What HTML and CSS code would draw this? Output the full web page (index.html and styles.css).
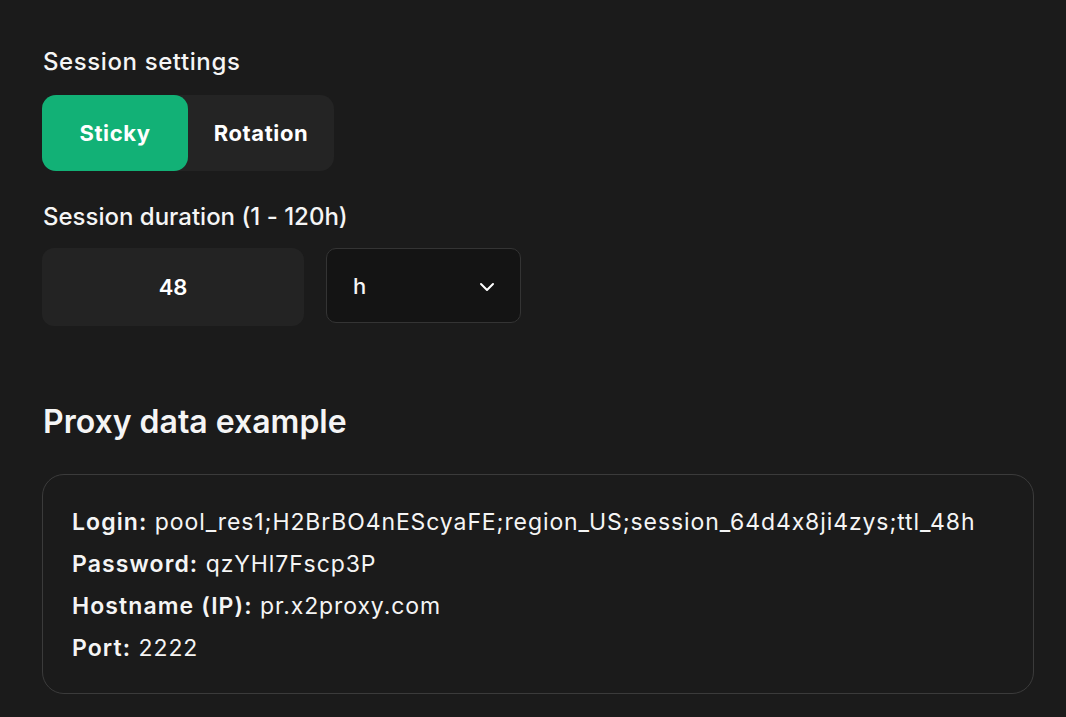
FILE: index.html
```html
<!DOCTYPE html>
<html lang="en">
<head>
    <meta charset="UTF-8">
    <meta name="viewport" content="width=device-width, initial-scale=1.0">
    <title>Session settings</title>
    <link rel="stylesheet" href="styles.css">
</head>
<body>
    <div class="page">
        <section class="settings">
            <h3 class="field-label">Session settings</h3>
            <div class="toggle">
                <button class="toggle-btn active">Sticky</button>
                <button class="toggle-btn">Rotation</button>
            </div>

            <h3 class="field-label duration-label">Session duration (1 - 120h)</h3>
            <div class="duration-row">
                <input class="duration-input" type="text" value="48">
                <div class="unit-select">
                    <span>h</span>
                    <svg class="chevron" width="18" height="10" viewBox="0 0 18 10" fill="none">
                        <path d="M3 2l6 6 6-6" stroke="#fff" stroke-width="2" stroke-linecap="round" stroke-linejoin="round"/>
                    </svg>
                </div>
            </div>
        </section>

        <section class="example">
            <h2 class="example-title">Proxy data example</h2>
            <div class="example-card">
                <p><b>Login:</b> pool_res1;H2BrBO4nEScyaFE;region_US;session_64d4x8ji4zys;ttl_48h</p>
                <p><b>Password:</b> qzYHl7Fscp3P</p>
                <p><b>Hostname (IP):</b> pr.x2proxy.com</p>
                <p><b>Port:</b> 2222</p>
            </div>
        </section>
    </div>
</body>
</html>
```

FILE: styles.css
```css
body, html {
    margin: 0;
    padding: 0;
    background-color: #1b1b1b;
    color: #f5f5f5;
    font-family: Inter, "Noto Sans", sans-serif;
    font-feature-settings: "calt" 0;
}
.page {
    padding: 48px 32px 0 42px;
}
.field-label {
    margin: 0 0 19px 1px;
    font-size: 24px;
    font-weight: 500;
    letter-spacing: 0.6px;
    line-height: 28px;
}
.toggle {
    display: flex;
    width: 292px;
    height: 76px;
    background-color: #242424;
    border-radius: 14px;
}
.toggle-btn {
    width: 146px;
    height: 76px;
    border: none;
    border-radius: 14px;
    background: transparent;
    color: #fff;
    font-family: inherit;
    font-size: 22px;
    font-weight: 700;
    letter-spacing: 0.6px;
    cursor: pointer;
}
.toggle-btn.active {
    background-color: #12b176;
}
.duration-label {
    margin-top: 32px;
    margin-bottom: 17px;
    letter-spacing: 0;
}
.duration-row {
    display: flex;
    align-items: flex-start;
    gap: 22px;
}
.duration-input {
    width: 262px;
    height: 78px;
    box-sizing: border-box;
    border: none;
    border-radius: 12px;
    background-color: #232323;
    color: #fff;
    font-family: inherit;
    font-size: 22px;
    font-weight: 600;
    text-align: center;
    outline: none;
}
.unit-select {
    width: 195px;
    height: 75px;
    box-sizing: border-box;
    display: flex;
    align-items: center;
    justify-content: space-between;
    padding: 0 24px 0 26px;
    border: 1px solid #343434;
    border-radius: 10px;
    background-color: #141414;
    font-size: 22px;
    font-weight: 500;
}
.chevron {
    margin-top: 2px;
}
.example-title {
    margin: 76px 0 32px 1px;
    font-size: 32px;
    font-weight: 600;
    line-height: 40px;
}
.example-card {
    width: 992px;
    box-sizing: border-box;
    padding: 26px 29px 24px;
    border: 1px solid #3b3b3b;
    border-radius: 22px;
}
.example-card p {
    margin: 0;
    font-size: 23px;
    letter-spacing: 0.9px;
    line-height: 42px;
}
.example-card b {
    font-weight: 600;
    letter-spacing: 1.1px;
}
```
